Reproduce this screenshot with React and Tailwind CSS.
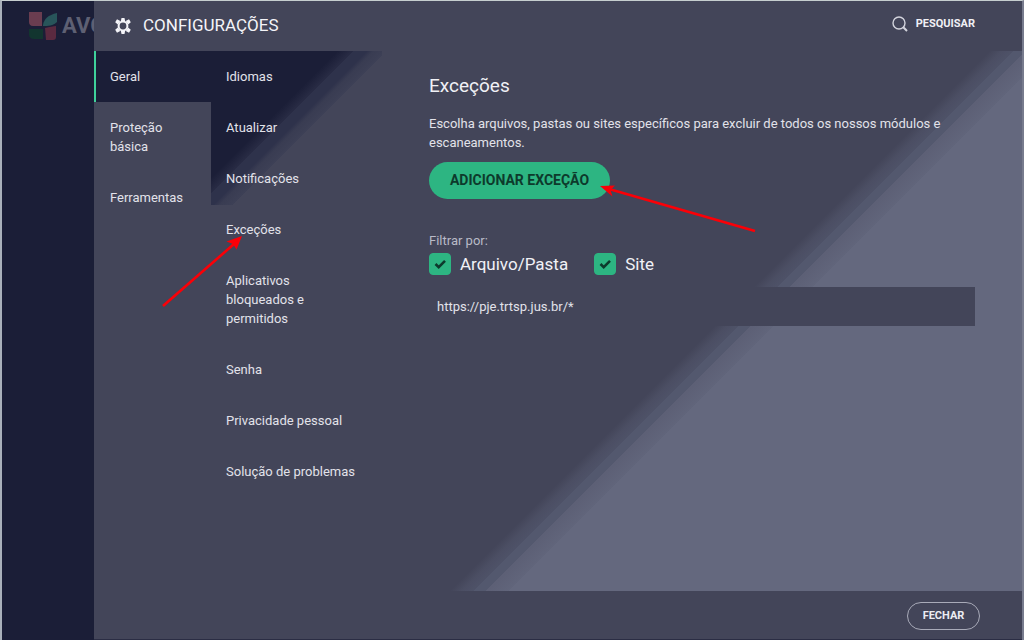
import { useState } from "react";

const SECTIONS = ["Geral", "Proteção básica", "Ferramentas"];

const PAGES = [
  "Idiomas",
  "Atualizar",
  "Notificações",
  "Exceções",
  "Aplicativos bloqueados e permitidos",
  "Senha",
  "Privacidade pessoal",
  "Solução de problemas",
];

function Logo() {
  return (
    <svg viewBox="0 0 30 30" className="h-[30px] w-[30px] shrink-0" aria-hidden="true">
      <path fill="#6a3d50" d="M1 1h13v14H5c-3 0-4-2-4-4z" />
      <path fill="#28555a" d="M15 14C16 8 20 4 29 2v9c-4 4-9 4-14 4z" />
      <path fill="#12352f" d="M1 18h14v10H6c-3 0-5-2-5-4z" />
      <path fill="#5a2a40" d="M17 17c5-1 8-2 11-2v11c0 2-1 3-3 3h-7z" />
    </svg>
  );
}

function GearIcon() {
  return (
    <svg viewBox="0 0 16 16" className="h-4 w-4" fill="none" aria-hidden="true">
      <circle cx="8" cy="8" r="4.4" stroke="#f4f4f8" strokeWidth="2" />
      <g fill="#f4f4f8">
        <path d="M6.5 0h3l.7 3.4H5.8zM6.5 16h3l.7-3.4H5.8z" />
        <path d="M.2 4.2 2 1.3l3.3 1.6-2.5 3.7zM15.8 4.2 14 1.3l-3.3 1.6 2.5 3.7z" />
        <path d="M.2 11.8 2 14.7l3.3-1.6-2.5-3.7zM15.8 11.8 14 14.7l-3.3-1.6 2.5-3.7z" />
      </g>
    </svg>
  );
}

function SearchIcon() {
  return (
    <svg viewBox="0 0 16 16" className="h-4 w-4" fill="none" stroke="#d3d4dd" aria-hidden="true">
      <circle cx="7" cy="7" r="6" strokeWidth="1.4" />
      <path d="M11.3 11.3 15 15" strokeWidth="2" />
    </svg>
  );
}

function FilterCheck({ label, checked, onChange }) {
  return (
    <label className="flex items-center gap-[9px] text-[17px] leading-6 text-[#f1f1f6]">
      <span className="relative block h-[22px] w-[22px]">
        <input
          type="checkbox"
          checked={checked}
          onChange={onChange}
          className="peer block h-[22px] w-[22px] appearance-none rounded-[4px] border border-[#2db582] checked:bg-[#2db582]"
        />
        <svg
          viewBox="0 0 22 22"
          className="pointer-events-none absolute inset-0 hidden peer-checked:block"
          fill="none"
          stroke="#0d3a2c"
          strokeWidth="2.6"
          aria-hidden="true"
        >
          <path d="m6.5 11 3.2 3.2L16 7.8" />
        </svg>
      </span>
      {label}
    </label>
  );
}

// Red pointers drawn over the window
function Arrows() {
  return (
    <svg className="pointer-events-none absolute -left-0.5 -top-px h-[320px] w-[780px]" viewBox="0 0 780 320" aria-hidden="true">
      <g stroke="#fb0007" strokeWidth="2.6">
        <path d="M163 306 234 244" />
        <path d="M755 231 609 189" />
      </g>
      <g fill="#fb0007">
        <path d="m242 236-5.5 13.5-3.5-5.5-6.500-2.5z" />
        <path d="m600 186 15-.5-4.5 4.5 2 6.5z" />
      </g>
    </svg>
  );
}

export default function App() {
  const [section, setSection] = useState("Geral");
  const [showFiles, setShowFiles] = useState(true);
  const [showSites, setShowSites] = useState(true);

  return (
    <div className="relative flex min-h-screen w-full border-x-2 border-t border-l-[#a9b0ba] border-r-[#777b8d] border-t-[#c6cecf] bg-[#1b1e37] font-[Roboto,sans-serif] text-[13px] text-[#e2e2ea]">
      {/* Main window, dimmed behind the settings */}
      <aside className="flex w-[92px] shrink-0 items-start gap-1 overflow-hidden pl-[26px] pt-[10px]">
        <Logo />
        <span className="text-[22px] font-bold leading-[30px] text-[#5e6073]">AVG</span>
      </aside>

      <div className="flex min-w-0 flex-1 flex-col bg-[#434559]">
        <header className="flex h-[50px] items-center justify-between pl-[21px] pr-[47px]">
          <h1 className="flex items-center gap-3 text-[17px] text-[#f4f4f8]">
            <GearIcon />
            CONFIGURAÇÕES
          </h1>
          <button type="button" className="flex items-center gap-2 pb-1 text-[11px] font-bold text-[#f0f0f5]">
            <SearchIcon />
            PESQUISAR
          </button>
        </header>

        <div className="flex flex-1">
          <nav className="w-[117px] shrink-0">
            {SECTIONS.map((name) => (
              <button
                key={name}
                type="button"
                onClick={() => setSection(name)}
                className={
                  name === section
                    ? "block w-full border-l-2 border-[#3fd29b] bg-[#1b1e37] py-4 pl-[14px] pr-6 text-left leading-[19px]"
                    : "block w-full border-l-2 border-transparent py-4 pl-[14px] pr-6 text-left leading-[19px]"
                }
              >
                {name}
              </button>
            ))}
          </nav>

          <nav className="w-[171px] shrink-0 bg-[linear-gradient(135deg,#1b1e37_39%,#292c45_44%,#2e324b_44%,#2e324b_48%,#393c52_50%,#3d4056_54%,#434559_54%)] bg-[length:100%_154px] bg-no-repeat">
            {PAGES.map((name) => (
              <a key={name} href="#" className="block py-4 pl-[15px] pr-[18px] leading-[19px]">
                {name === "Aplicativos bloqueados e permitidos" ? (
                  <span className="block w-[90px]">{name}</span>
                ) : (
                  name
                )}
              </a>
            ))}
          </nav>

          <main className="min-w-0 flex-1 bg-[linear-gradient(135deg,#434559_51.5%,#4b4e63_52.5%,#4e5268_53.5%,#53586e_53.5%,#53586e_54.5%,#5c5f75_54.5%,#61657b_56.5%,#64687e_56.5%)] pl-[47px] pr-[47px] pt-[23px]">
            <h2 className="text-[19px] leading-6 text-[#f1f1f6]">Exceções</h2>
            <p className="mt-4 leading-[19px]">
              Escolha arquivos, pastas ou sites específicos para excluir de todos os nossos módulos e escaneamentos.
            </p>
            <button
              type="button"
              className="mt-[10px] block h-[37px] w-[181px] rounded-full bg-[#2db582] text-[14px] font-bold text-[#0d3a2c]"
            >
              ADICIONAR EXCEÇÃO
            </button>

            <p className="mt-8 leading-[19px] text-[#b9bac7]">Filtrar por:</p>
            <div className="mt-[2px] flex gap-[26px]">
              <FilterCheck label="Arquivo/Pasta" checked={showFiles} onChange={() => setShowFiles(!showFiles)} />
              <FilterCheck label="Site" checked={showSites} onChange={() => setShowSites(!showSites)} />
            </div>

            <ul className="mt-[11px]">
              {showSites && <li className="bg-[#434559] px-2 py-[10px] leading-[19px]">https://pje.trtsp.jus.br/*</li>}
            </ul>
          </main>
        </div>

        <footer className="flex h-[49px] items-center justify-end border-b border-[#2b2d44] pr-[42px] pt-[2px]">
          <button
            type="button"
            className="h-[28px] w-[73px] rounded-full border border-[#a9abb9] text-[11px] font-bold text-[#ececf2]"
          >
            FECHAR
          </button>
        </footer>
      </div>

      <Arrows />
    </div>
  );
}
